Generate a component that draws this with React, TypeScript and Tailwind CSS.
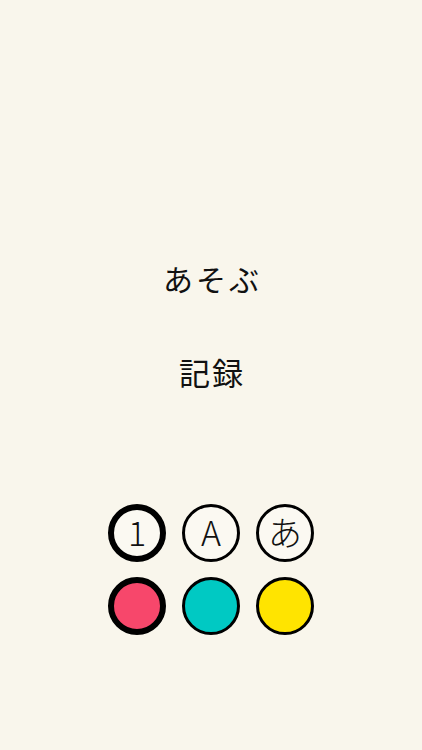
const font = { fontFamily: '"Noto Sans CJK JP", "Noto Sans", sans-serif' };

const modes = [
  { label: '1', selected: true },
  { label: 'A', selected: false },
  { label: 'あ', selected: false },
];

const colors = [
  { bg: 'bg-[#f7476b]', selected: true },
  { bg: 'bg-[#00c9c3]', selected: false },
  { bg: 'bg-[#ffe400]', selected: false },
];

export default function App() {
  return (
    <div className="flex h-[750px] w-full flex-col items-center bg-[#f9f6ec] text-[#111]" style={font}>
      {/* Menu */}
      <div className="mt-[256px] flex flex-col items-center gap-[50px]">
        <button className="h-[44px] text-[30px] leading-[44px] tracking-[3px] pl-[3px]">あそぶ</button>
        <button className="h-[44px] text-[31px] leading-[44px] tracking-[2px] pl-[2px]">記録</button>
      </div>

      {/* Options */}
      <div className="mt-[110px] flex flex-col gap-[15px]">
        <div className="flex gap-[16px]">
          {modes.map((m) => (
            <div
              key={m.label}
              className={
                'flex h-[58px] w-[58px] items-center justify-center rounded-full border-black bg-[#fbf9f2] text-[34px] font-light leading-none ' +
                (m.selected ? 'border-[6px]' : 'border-[3px]')
              }
            >
              <span className="-mt-[2px]">{m.label}</span>
            </div>
          ))}
        </div>
        <div className="flex gap-[16px]">
          {colors.map((c) => (
            <div
              key={c.bg}
              className={
                'h-[58px] w-[58px] rounded-full border-black ' +
                c.bg +
                ' ' +
                (c.selected ? 'border-[6px]' : 'border-[3px]')
              }
            />
          ))}
        </div>
      </div>
    </div>
  );
}
